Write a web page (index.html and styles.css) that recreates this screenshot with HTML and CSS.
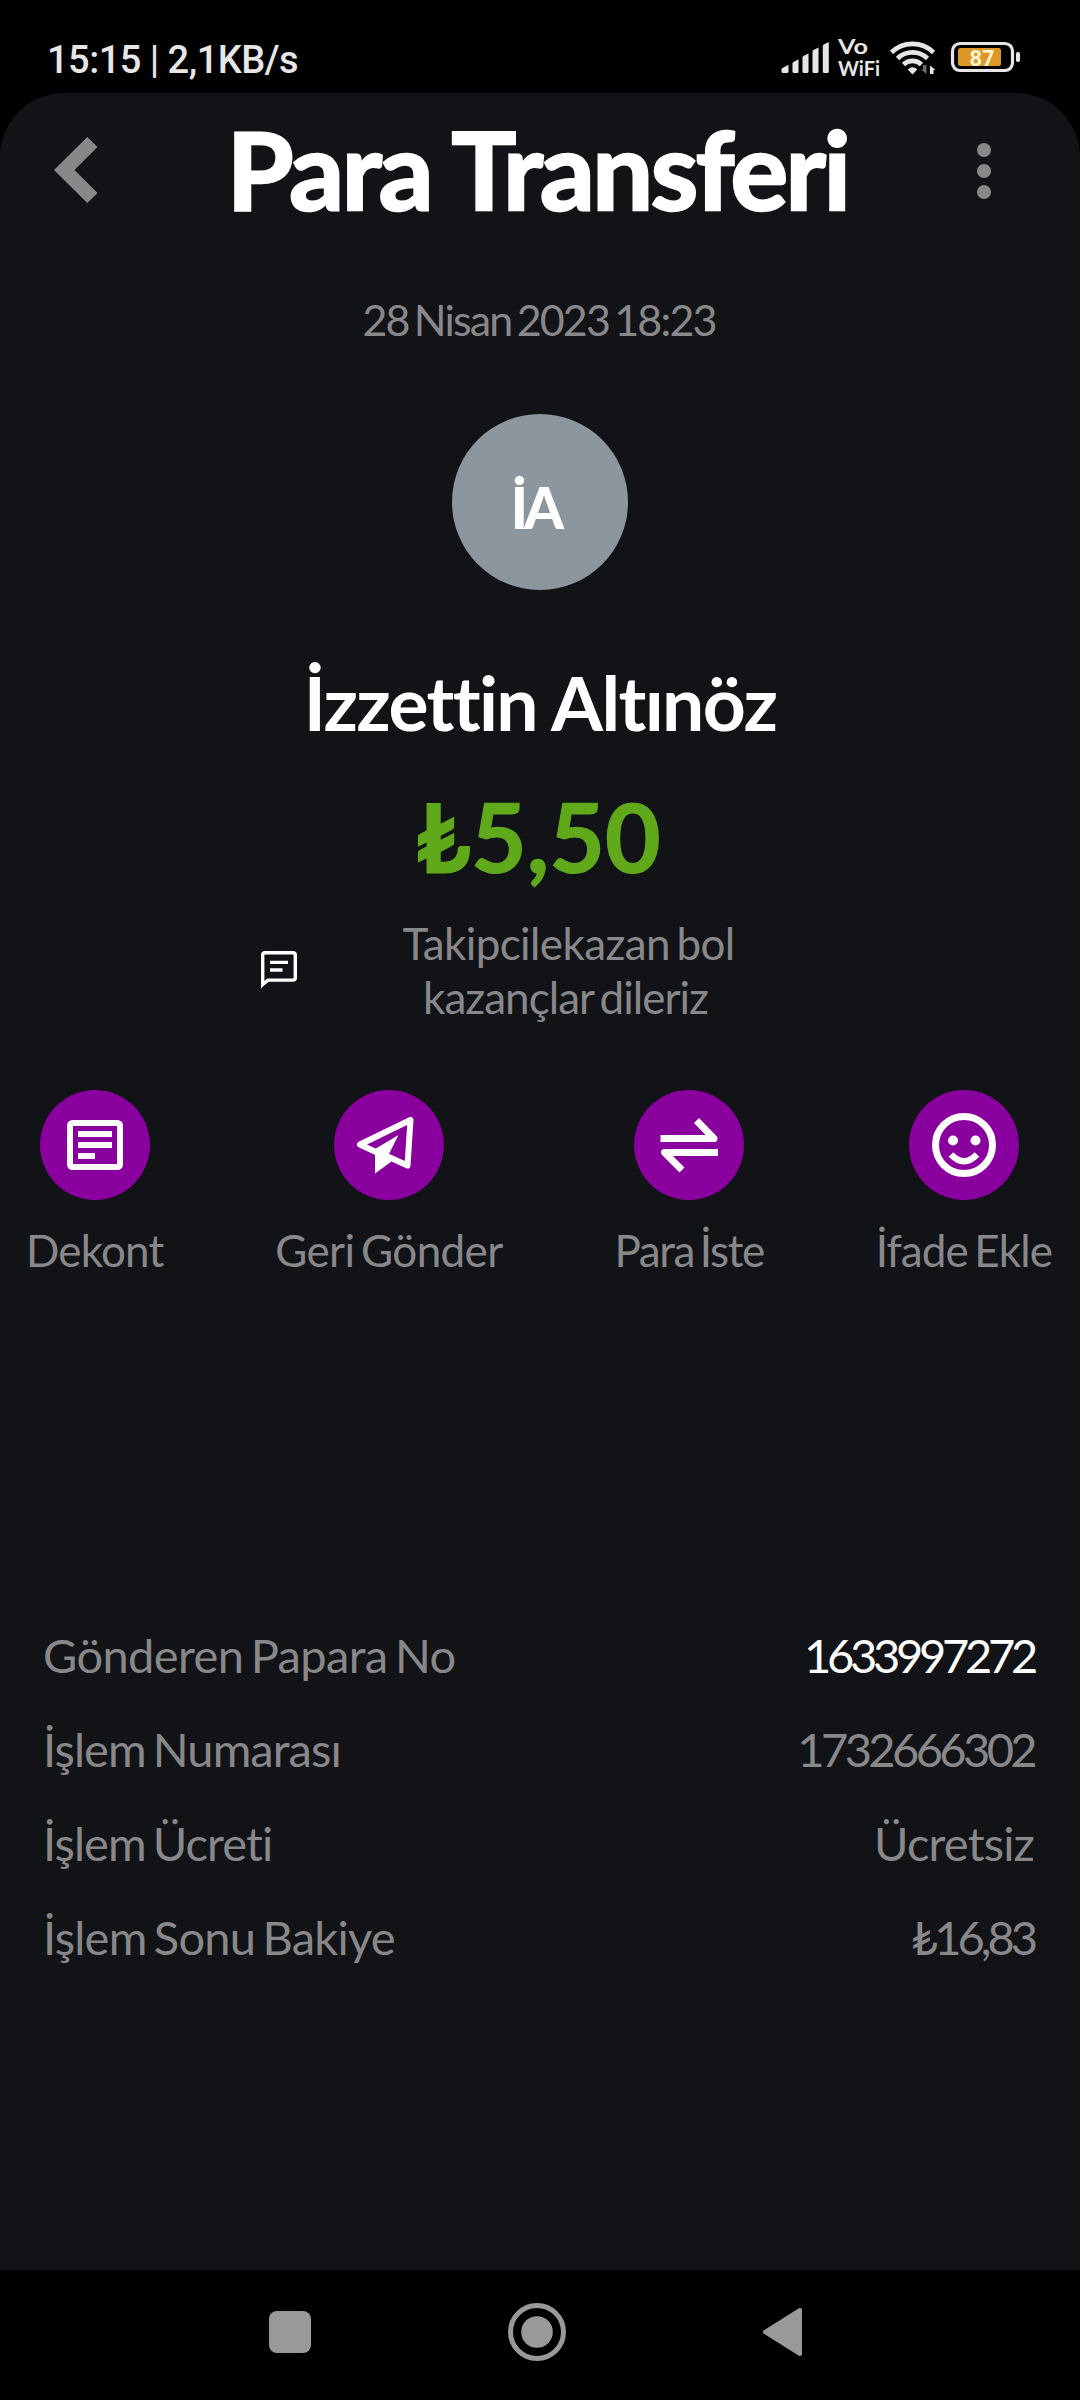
FILE: index.html
```html
<!DOCTYPE html>
<html lang="tr">
<head>
<meta charset="utf-8">
<title>Para Transferi</title>
<link rel="stylesheet" href="styles.css">
</head>
<body>
<div class="screen">
  <div class="statusbar">
    <span class="clock">15:15 | 2,1KB/s</span>
    <svg class="status-icons" viewBox="780 26 244 62" width="244" height="62">
      <g fill="#e6e6e6">
        <path d="M781.5 69.5q0-1 1-1.5l6-3.2v6.700q0 1.500-1.500 1.500h-4q-1.500 0-1.500-1.500z"/>
        <path d="M792.500 63.500q0-1 1-1.500l5-2.800v12.300q0 1.500-1.500 1.500h-3q-1.500 0-1.500-1.500z"/>
        <path d="M802.500 57.500q0-1 1-1.500l5-2.500v18q0 1.500-1.500 1.500h-3q-1.500 0-1.500-1.500z"/>
        <path d="M812.500 51.500q0-1 1-1.500l5-2.500v24q0 1.500-1.500 1.500h-3q-1.500 0-1.500-1.500z"/>
        <path d="M822.800 46q0-1 1-1.500l5-2.500v29.500q0 1.500-1.500 1.500h-3q-1.500 0-1.500-1.500z"/>
        <path d="M912.500 74.500l-4.800-5q4.800-4.500 9.600 0z"/>
        <path d="M930 74V65.500l5.500 4.500h-2v4z"/>
      </g>
      <path d="M926.500 65v9l-5.500-4.500h2V65z" fill="#6a6a6a"/>
      <g fill="none" stroke="#e6e6e6" stroke-width="4.600">
        <path d="M891.500 52.500a30 30 0 0 1 42 0"/>
        <path d="M897.500 58.500a21.500 21.500 0 0 1 30 0"/>
        <path d="M903.500 64.500a13 13 0 0 1 18 0"/>
      </g>
      <text class="vo" x="838" y="54" textLength="30" lengthAdjust="spacingAndGlyphs">Vo</text>
      <text class="vo" x="838" y="76" textLength="42" lengthAdjust="spacingAndGlyphs">WiFi</text>
      <rect x="952.500" y="43.500" width="60" height="27" rx="7.500" fill="none" stroke="#e6e6e6" stroke-width="3.200"/>
      <rect x="958" y="48" width="43" height="18" rx="2.500" fill="#de9726"/>
      <rect x="1016" y="52" width="4" height="10" rx="1.800" fill="#e6e6e6"/>
      <text class="level" x="969.500" y="65.500" textLength="25">87</text>
    </svg>
  </div>

  <main class="panel">
    <header class="header">
      <svg class="back" viewBox="0 0 44 66" width="44" height="66"><path d="M33.300 0 43.500 10 20.500 33 43.500 56 33.300 66 0 33z" fill="#88888a"/></svg>
      <h1 class="title">Para Transferi</h1>
      <svg class="more" viewBox="0 0 14 56" width="14" height="56" fill="#88888a"><circle cx="7" cy="7" r="7"/><circle cx="7" cy="28" r="7"/><circle cx="7" cy="49" r="7"/></svg>
    </header>

    <p class="date">28 Nisan 2023 18:23</p>
    <div class="avatar">İA</div>
    <h2 class="name">İzzettin Altınöz</h2>
    <p class="amount">₺5,50</p>

    <div class="note">
      <svg viewBox="0 0 36 38" width="36" height="38"><path d="M1.700 33.500V4q0-2.300 2.300-2.300h28q2.300 0 2.300 2.300v22.800q0 2.300-2.300 2.300H7z" fill="none" stroke="#fff" stroke-width="3.400"/><path d="M0 30h6l-6 7.500zM9 9.700h18V13H9zM9 17.300h12.500v3.400H9z" fill="#fff"/></svg>
      <p class="note-text"><span class="line">Takipcilekazan bol</span><br><span class="line line-2">kazançlar dileriz</span></p>
    </div>

    <nav class="actions">
      <div class="action">
        <span class="disc"><svg viewBox="0 0 110 110"><rect x="30" y="33" width="50" height="44" rx="2.500" fill="none" stroke="#fff" stroke-width="6"/><path d="M38 41h34v6H38zM38 52h34v6H38zM38 63h17v6H38z" fill="#fff"/></svg></span>
        <span class="label dekont">Dekont</span>
      </div>
      <div class="action">
        <span class="disc"><svg viewBox="0 0 110 110"><path d="M26 54.500 76.500 30 73.500 75.500 56 67.500M26 54.500 43 62.500" fill="none" stroke="#fff" stroke-width="6" stroke-linejoin="round" stroke-linecap="round"/><path d="M64.500 45 41 59V83.500L57.500 71.500 60 67 55 64z" fill="#fff"/></svg></span>
        <span class="label geri">Geri Gönder</span>
      </div>
      <div class="action">
        <span class="disc"><svg viewBox="0 0 110 110" fill="none" stroke="#fff" stroke-width="7" stroke-linejoin="round"><path d="M26.500 48.500H80L62.500 30.500M84 62.500H30.500L48 80"/></svg></span>
        <span class="label para">Para İste</span>
      </div>
      <div class="action">
        <span class="disc"><svg viewBox="0 0 110 110"><circle cx="55" cy="55" r="28.500" fill="none" stroke="#fff" stroke-width="7"/><circle cx="44" cy="50.500" r="5" fill="#fff"/><circle cx="66.500" cy="50.500" r="5" fill="#fff"/><path d="M42 64.500Q55 78 68 64.500" fill="none" stroke="#fff" stroke-width="6.500"/></svg></span>
        <span class="label ifade">İfade Ekle</span>
      </div>
    </nav>

    <dl class="details">
      <div class="row"><dt class="sender">Gönderen Papara No</dt><dd class="account">1633997272</dd></div>
      <div class="row"><dt>İşlem Numarası</dt><dd class="number">1732666302</dd></div>
      <div class="row"><dt>İşlem Ücreti</dt><dd class="fee">Ücretsiz</dd></div>
      <div class="row"><dt class="remaining">İşlem Sonu Bakiye</dt><dd class="balance">₺16,83</dd></div>
    </dl>
  </main>

  <footer class="navbar">
    <svg viewBox="0 0 42 42" width="42" height="42"><rect width="42" height="42" rx="8" fill="#999"/></svg>
    <svg viewBox="0 0 58 58" width="58" height="58"><circle cx="29" cy="29" r="26.500" fill="none" stroke="#999" stroke-width="5"/><circle cx="29" cy="29" r="15.800" fill="#999"/></svg>
    <svg viewBox="0 0 39 48" width="39" height="48"><path d="M37 2v44L2 24z" fill="#999" stroke="#999" stroke-width="4" stroke-linejoin="round"/></svg>
  </footer>
</div>
</body>
</html>
```
FILE: styles.css
```css
* { box-sizing: border-box; margin: 0; padding: 0; }
body { background: #000; color: #88888a; font-family: Lato, "Open Sans", sans-serif; }
svg { display: block; flex: none; }
.screen { width: 1080px; height: 2400px; display: flex; flex-direction: column; overflow: hidden; }

.statusbar { height: 93px; display: flex; justify-content: space-between; align-items: flex-start; padding: 26px 56px 0 47px; }
.clock { margin-top: 11px; font: 500 38px/46px Roboto, sans-serif; letter-spacing: -.52px; color: #e6e6e6; white-space: pre; }
.vo { font: 700 21px Lato, sans-serif; fill: #e6e6e6; }
.level { font: 700 22px Roboto, sans-serif; fill: #fff3d0; }

.panel { height: 2177px; background: #121317; border-radius: 64px 64px 0 0; display: flex; flex-direction: column; align-items: center; }
.header { width: 100%; height: 150px; display: flex; align-items: center; justify-content: space-between; padding: 0 89px 0 54px; }
.title { font-size: 108px; line-height: 130px; font-weight: 700; letter-spacing: -2.500px; color: #fff; white-space: nowrap; -webkit-text-stroke: 2.500px #fff; }
.back { margin-top: 4px; }
.more { margin-top: 5px; }

.date { margin-top: 50px; font-size: 43px; line-height: 54px; letter-spacing: -1.830px; word-spacing: -4px; padding-right: 2px; }
.avatar { margin-top: 67px; width: 176px; height: 176px; border-radius: 50%; background: #8b969e; color: #fff; display: flex; align-items: center; justify-content: center; padding: 10px 9px 0 0; font-size: 57px; font-weight: 900; letter-spacing: -4px; }
.name { margin-top: 67px; font-size: 75px; line-height: 90px; font-weight: 700; letter-spacing: -1.650px; color: #fff; }
.amount { margin-top: 31px; font-size: 96px; line-height: 116px; font-weight: 700; letter-spacing: .1px; color: #5fa91b; -webkit-text-stroke: 1.200px #5fa91b; padding-right: 4px; }

.note { width: 100%; margin-top: 22px; display: flex; align-items: center; padding-left: 261px; }
.note-text { margin-left: 105px; width: 333px; text-align: center; font-size: 44px; line-height: 54px; letter-spacing: -.620px; word-spacing: -4px; white-space: nowrap; }
.note-text .line-2 { letter-spacing: -.970px; padding-right: 6px; }

.actions { width: 100%; margin-top: 66px; display: flex; justify-content: space-between; padding: 0 28px 0 26px; }
.action { display: flex; flex-direction: column; align-items: center; }
.disc { width: 110px; height: 110px; border-radius: 50%; background: #8a009e; }
.label { margin-top: 23px; font-size: 44px; line-height: 54px; white-space: nowrap; word-spacing: -4px; }
.dekont { letter-spacing: -.840px; }
.geri { letter-spacing: -.620px; }
.para { letter-spacing: -1.400px; }
.ifade { letter-spacing: -.880px; }

.details { width: 100%; margin-top: 331px; padding: 0 46px 0 43px; font-size: 47px; }
.row { height: 94px; display: flex; align-items: center; justify-content: space-between; letter-spacing: -.930px; word-spacing: -4px; }
.sender { letter-spacing: -.620px; }
.remaining { letter-spacing: -.760px; }
.account { color: #fff; letter-spacing: -4.260px; }
.number { letter-spacing: -3.590px; }
.fee { letter-spacing: -.840px; }
.balance { letter-spacing: -4px; }

.navbar { height: 130px; display: flex; justify-content: space-between; align-items: center; padding: 0 278px 6px 269px; }
```
